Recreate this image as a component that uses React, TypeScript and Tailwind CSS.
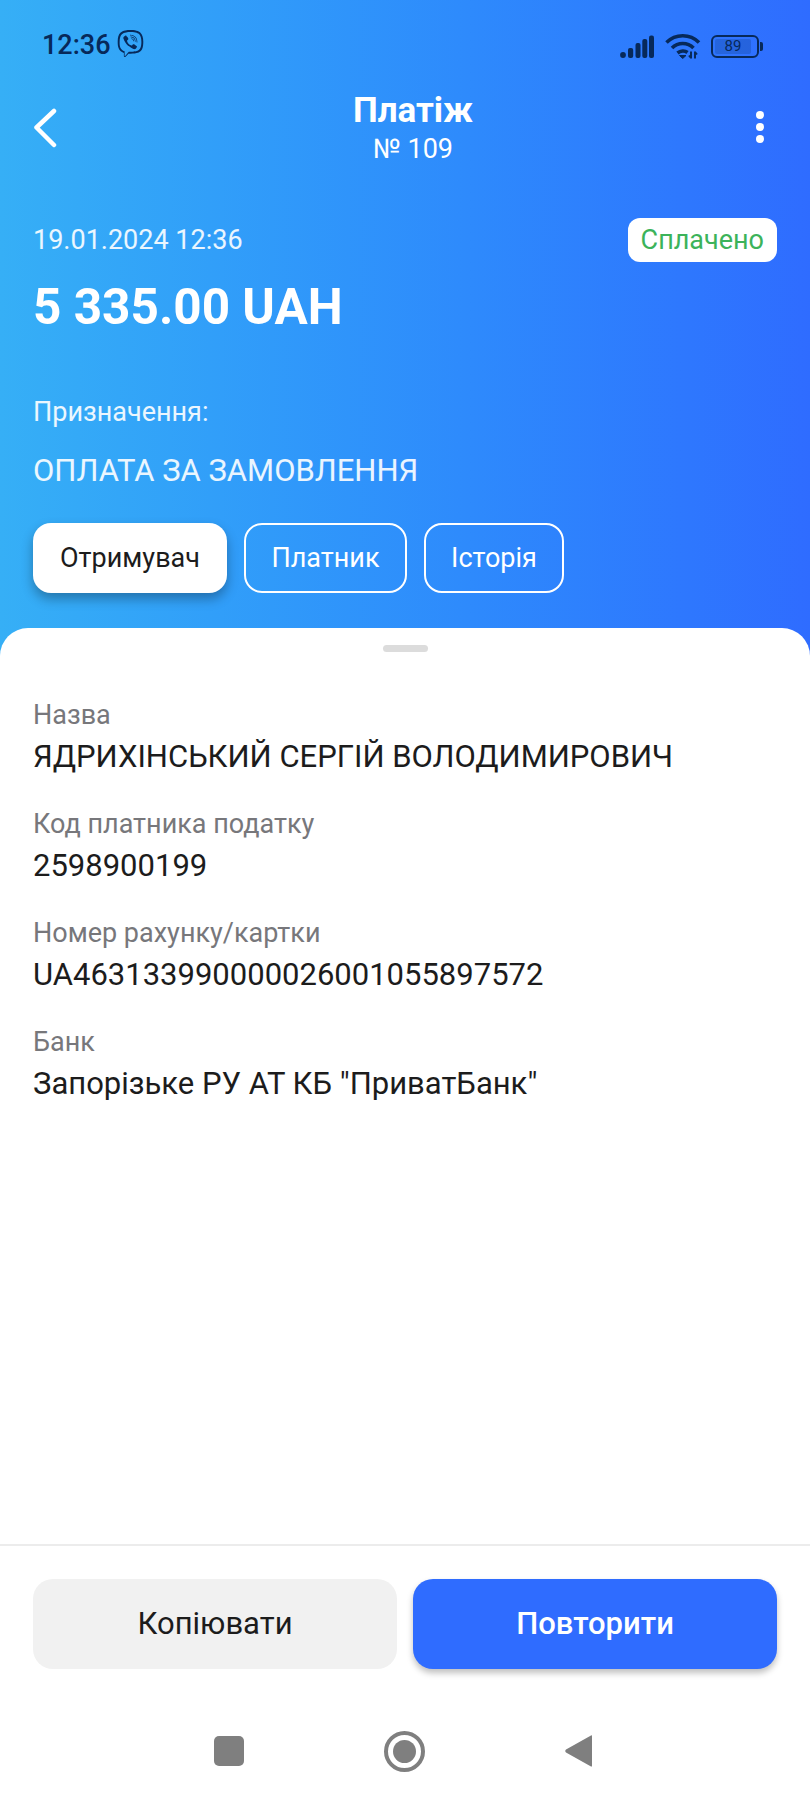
import { SiViber } from 'react-icons/si'

const fields = [
  { label: 'Назва', value: 'ЯДРИХІНСЬКИЙ СЕРГІЙ ВОЛОДИМИРОВИЧ' },
  { label: 'Код платника податку', value: '2598900199' },
  { label: 'Номер рахунку/картки', value: 'UA463133990000026001055897572' },
  { label: 'Банк', value: 'Запорізьке РУ АТ КБ "ПриватБанк"' },
]

function StatusIcons() {
  return (
    <div className="mt-[2px] flex items-center">
      {/* signal */}
      <svg width="35" height="23" viewBox="0 0 35 23" fill="#07295a">
        <circle cx="3" cy="20" r="2.9" />
        <rect x="8" y="13" width="5.2" height="10" rx="2" />
        <rect x="15.5" y="8" width="5" height="15" rx="2" />
        <rect x="22.3" y="4" width="5" height="19" rx="2" />
        <rect x="29" y="0.5" width="5" height="22.5" rx="2" />
      </svg>
      {/* wifi */}
      <svg width="36" height="26" viewBox="0 0 36 26" fill="none" stroke="#07295a" strokeWidth="3.6" className="ml-[10px]">
        <path d="M1.5 9.5C10.5 0.5 25 0.5 34 9.5" />
        <path d="M7 15C13 9 22.5 9 28.5 15" />
        <path d="M12.5 20C15.5 17.5 20 17.5 22.5 19.5" />
        <path d="M14.5 22.5L21 22.5L17.7 25.5Z" fill="#07295a" strokeWidth="1" />
        <path d="M26 18.5V25.5M24 22.5L26 25" strokeWidth="2" />
        <path d="M30 18.5V25.5M32 21.5L30 19" strokeWidth="2" />
      </svg>
      {/* battery */}
      <div className="ml-[10px] flex items-center">
        <div className="flex h-[23px] w-[48px] items-center rounded-[6px] border-[2.5px] border-[#07295a] p-[2px]">
          <div className="flex h-full w-[36px] items-center justify-center rounded-[2px] bg-[#07295a]/20 text-[15px] font-normal leading-none text-[#07295a]">
            89
          </div>
        </div>
        <div className="ml-[1px] h-[9px] w-[3px] rounded-r-[2px] bg-[#07295a]" />
      </div>
    </div>
  )
}

export default function App() {
  return (
    <div className="flex h-[1800px] w-[810px] flex-col overflow-hidden bg-gradient-to-r from-[#36aff6] to-[#2f6cff] font-['Roboto',sans-serif]">
      {/* Status bar */}
      <div className="flex h-[90px] items-center justify-between pl-[42px] pr-[47px]">
        <div className="flex items-center">
          <span className="text-[27px] font-medium leading-none text-[#07295a]">12:36</span>
          <SiViber className="ml-[6px] -mt-[4px] text-[27px] text-[#07295a]" />
        </div>
        <StatusIcons />
      </div>

      {/* Header */}
      <div className="flex items-start justify-between px-[33px]">
        <svg width="24" height="40" viewBox="0 0 24 40" fill="none" stroke="white" strokeWidth="4.5" strokeLinecap="round" strokeLinejoin="round" className="mt-[18px]">
          <path d="M21 3L3.5 19.5L21 37" />
        </svg>
        <div className="ml-[26px] flex flex-col items-center text-white">
          <span className="text-[35px] font-bold leading-[42px]">Платіж</span>
          <span className="mt-[2px] text-[27px] leading-[30px]">№ 109</span>
        </div>
        <div className="mt-[21px] flex w-[34px] flex-col items-center gap-[4px]">
          <div className="size-[8px] rounded-full bg-white" />
          <div className="size-[8px] rounded-full bg-white" />
          <div className="size-[8px] rounded-full bg-white" />
        </div>
      </div>

      {/* Payment summary */}
      <div className="mt-[54px] px-[33px] text-white">
        <div className="flex items-center justify-between">
          <span className="text-[27px] leading-[30px] text-white/90">19.01.2024 12:36</span>
          <span className="flex h-[44px] items-center rounded-[12px] bg-white px-[13px] text-[27px] text-[#3cb35a]">
            Сплачено
          </span>
        </div>
        <div className="mt-[15px] text-[49.5px] font-bold leading-[60px]">5 335.00 UAH</div>
        <div className="mt-[60px] text-[27px] leading-[30px] text-white/90">Призначення:</div>
        <div className="mt-[27px] text-[31px] leading-[34px] text-white/90">ОПЛАТА ЗА ЗАМОВЛЕННЯ</div>
      </div>

      {/* Tabs */}
      <div className="mt-[35px] flex gap-[17px] px-[33px] text-[27px]">
        <div className="flex h-[70px] w-[194px] items-center justify-center rounded-[18px] bg-white text-[#1c1c1c] shadow-[0_6px_12px_rgba(0,0,0,0.3)]">
          Отримувач
        </div>
        <div className="flex h-[70px] w-[163px] items-center justify-center rounded-[18px] border-2 border-white text-white">
          Платник
        </div>
        <div className="flex h-[70px] w-[140px] items-center justify-center rounded-[18px] border-2 border-white text-white">
          Історія
        </div>
      </div>

      {/* Bottom sheet */}
      <div className="mt-[35px] flex flex-1 flex-col rounded-t-[28px] bg-white">
        <div className="mx-auto mt-[17px] h-[7px] w-[45px] rounded-full bg-[#dcdcdc]" />
        <div className="mt-[46px] flex flex-1 flex-col gap-[30px] px-[33px]">
          {fields.map((f) => (
            <div key={f.label}>
              <div className="text-[27px] leading-[34px] text-[#77777b]">{f.label}</div>
              <div className="mt-[5px] text-[31px] leading-[40px] text-[#1c1c1c]">{f.value}</div>
            </div>
          ))}
        </div>

        {/* Actions */}
        <div className="flex gap-[16px] border-t-2 border-[#ececec] px-[33px] pt-[33px]">
          <div className="flex h-[90px] flex-1 items-center justify-center rounded-[20px] bg-[#f1f1f1] text-[31px] text-[#1c1c1c]">
            Копіювати
          </div>
          <div className="flex h-[90px] flex-1 items-center justify-center rounded-[20px] bg-[#2f6cff] text-[31px] font-medium text-white shadow-[0_4px_6px_rgba(0,0,0,0.25)]">
            Повторити
          </div>
        </div>

        {/* Android nav */}
        <div className="flex h-[131px] items-center justify-center gap-[140px] pr-[4px] pt-[33px]">
          <div className="h-[30px] w-[30px] rounded-[5px] bg-[#7f7f7f]" />
          <div className="flex size-[41px] items-center justify-center rounded-full border-[4px] border-[#7f7f7f]">
            <div className="size-[23px] rounded-full bg-[#7f7f7f]" />
          </div>
          <svg width="27" height="34" viewBox="0 0 27 34" fill="#7f7f7f">
            <path d="M26 1.5C26.5 1 27 1.5 27 2.5V31.5C27 32.5 26.5 33 26 32.5L1 18.5C0 17.7 0 16.3 1 15.5Z" />
          </svg>
        </div>
      </div>
    </div>
  )
}
